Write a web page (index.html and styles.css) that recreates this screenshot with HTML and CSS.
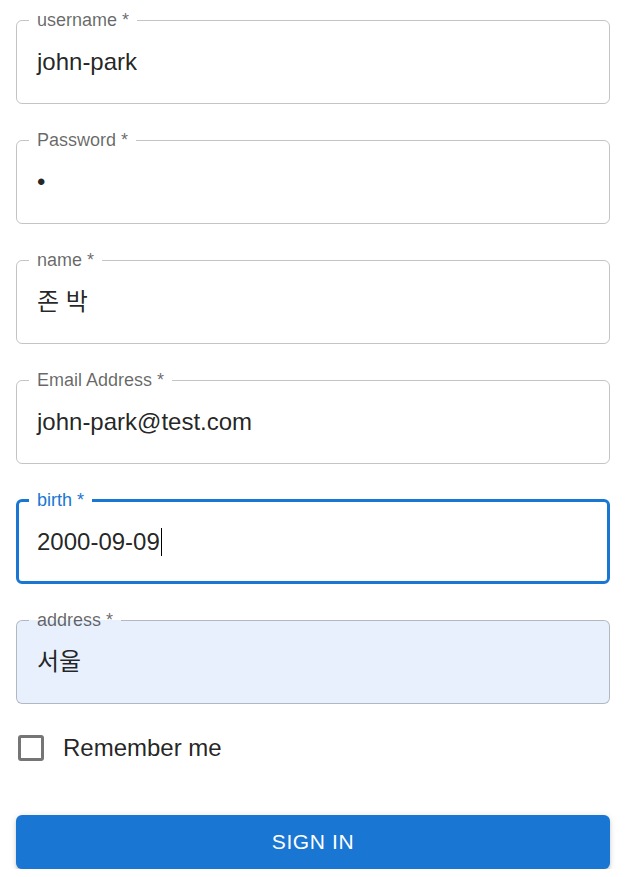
FILE: index.html
```html
<!DOCTYPE html>
<html lang="ko">
  <head>
    <meta charset="UTF-8" />
    <meta name="viewport" content="width=device-width, initial-scale=1.0" />
    <title>Sign up</title>
    <link rel="stylesheet" href="styles.css">
  </head>
  <body>
    <form class="form">
      <fieldset class="field">
        <legend class="field-label">username *</legend>
        <div class="field-value">john-park</div>
      </fieldset>
      <fieldset class="field">
        <legend class="field-label">Password *</legend>
        <div class="field-value">•</div>
      </fieldset>
      <fieldset class="field">
        <legend class="field-label">name *</legend>
        <div class="field-value">존 박</div>
      </fieldset>
      <fieldset class="field">
        <legend class="field-label">Email Address *</legend>
        <div class="field-value">john-park@test.com</div>
      </fieldset>
      <fieldset class="field focused">
        <legend class="field-label">birth *</legend>
        <div class="field-value">2000-09-09<span class="caret"></span></div>
      </fieldset>
      <fieldset class="field autofill">
        <legend class="field-label">address *</legend>
        <div class="field-value">서울</div>
      </fieldset>

      <label class="remember">
        <span class="checkbox"></span>
        <span class="remember-text">Remember me</span>
      </label>

      <button type="button" class="submit">Sign In</button>
    </form>
  </body>
</html>
```

FILE: styles.css
```css
* {
  box-sizing: border-box;
  margin: 0;
  padding: 0;
}

body {
  font-family: "Liberation Sans", "Noto Sans CJK KR", sans-serif;
  background-color: #ffffff;
  color: rgba(0, 0, 0, 0.87);
}

.form {
  width: 594px;
  margin: 0 16px;
  display: flex;
  flex-direction: column;
}

.field {
  margin-top: 10px;
  margin-bottom: 16px;
  padding: 0 20px;
  border: 1px solid rgba(0, 0, 0, 0.23);
  border-radius: 6px;
  min-width: 0;
}

.field-label {
  margin-left: 12px;
  padding: 0 8px;
  font-size: 18px;
  line-height: 20px;
  color: rgba(0, 0, 0, 0.6);
  margin-inline-start: -8px;
}

.field-value {
  font-size: 24px;
  line-height: 28px;
  padding: 18px 0 27px;
  white-space: nowrap;
}

.field.focused {
  border: 3px solid #1976d2;
  padding: 0 18px;
}

.field.focused .field-label {
  color: #1976d2;
  margin-inline-start: -8px;
}

.field.focused .field-value {
  padding-bottom: 25px;
}

.caret {
  display: inline-block;
  width: 1px;
  height: 28px;
  margin-left: 1px;
  background-color: #000000;
  vertical-align: top;
}

.field.autofill {
  background-color: #e8f0fe;
}

.remember {
  height: 63px;
  margin-top: -4px;
  display: flex;
  align-items: center;
  gap: 19px;
  padding-left: 2px;
}

.checkbox {
  width: 26px;
  height: 26px;
  border: 3px solid #757575;
  border-radius: 3px;
  margin-top: 1px;
}

.remember-text {
  font-size: 24px;
}

.submit {
  margin-top: 36px;
  height: 54px;
  border: none;
  border-radius: 6px;
  background-color: #1976d2;
  color: #ffffff;
  font-family: inherit;
  font-size: 21px;
  font-weight: 500;
  letter-spacing: 0.6px;
  text-transform: uppercase;
  box-shadow: 0 4px 1.5px -3px rgba(0, 0, 0, 0.2),
    0 3px 3px 0 rgba(0, 0, 0, 0.14), 0 1.5px 7.5px 0 rgba(0, 0, 0, 0.12);
}
```
